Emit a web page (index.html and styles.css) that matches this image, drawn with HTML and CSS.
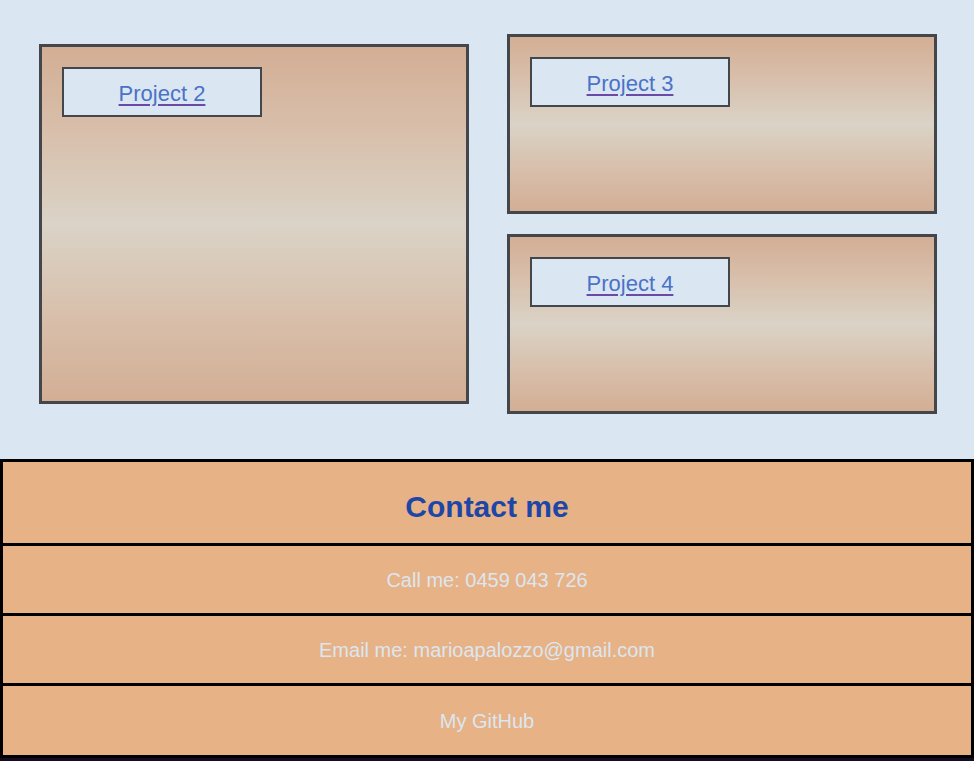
FILE: index.html
```html
<!DOCTYPE html>
<html lang="en">
<head>
<meta charset="utf-8">
<title>Projects</title>
<link rel="stylesheet" href="styles.css">
</head>
<body>
<main class="projects">
  <div class="card card-big">
    <div class="label"><a href="#" class="link">Project 2</a></div>
  </div>
  <div class="column">
    <div class="card card-small">
      <div class="label"><a href="#" class="link">Project 3</a></div>
    </div>
    <div class="card card-small">
      <div class="label"><a href="#" class="link">Project 4</a></div>
    </div>
  </div>
</main>
<footer class="contact">
  <h2 class="row row-title">Contact me</h2>
  <p class="row row-item">Call me: 0459 043 726</p>
  <p class="row row-item">Email me: marioapalozzo@gmail.com</p>
  <p class="row row-item row-last">My GitHub</p>
</footer>
</body>
</html>
```

FILE: styles.css
```css
html {
  background: #140c22;
}
body {
  margin: 0;
  background: #dae6f2;
  font-family: "Liberation Sans", Arial, Helvetica, sans-serif;
}
.projects {
  display: flex;
  align-items: center;
  gap: 38px;
  padding: 34px 0 45px 39px;
}
.column {
  display: flex;
  flex-direction: column;
  gap: 20px;
}
.card {
  box-sizing: border-box;
  width: 430px;
  border: 3px solid #43474b;
  background: linear-gradient(to bottom, #d3ae95 0%, #d8c0ac 25%, #dad3c7 50%, #d8c0ac 75%, #d3ae95 100%);
  padding: 20px;
}
.card-big {
  height: 360px;
}
.card-small {
  height: 180px;
}
.label {
  box-sizing: border-box;
  width: 200px;
  height: 50px;
  border: 2px solid #43474b;
  background: #dae6f2;
  display: flex;
  align-items: center;
  justify-content: center;
}
.link {
  font-size: 22px;
  color: #4a72c6;
  text-decoration: underline;
  text-decoration-color: #6a4aa6;
  text-underline-offset: 3px;
  margin-top: 4px;
}
.contact {
  border: 3px solid #000;
  background: #e7b285;
}
.row {
  margin: 0;
  display: flex;
  align-items: center;
  justify-content: center;
  border-top: 3px solid #000;
  height: 70px;
  font-size: 20px;
  font-weight: normal;
  color: #dce6f0;
  box-sizing: border-box;
  padding-top: 2px;
}
.row-title {
  border-top: none;
  height: 81px;
  font-size: 30px;
  font-weight: bold;
  color: #1d46a8;
  padding-top: 8px;
}
.row-last {
  height: 72px;
}
```
